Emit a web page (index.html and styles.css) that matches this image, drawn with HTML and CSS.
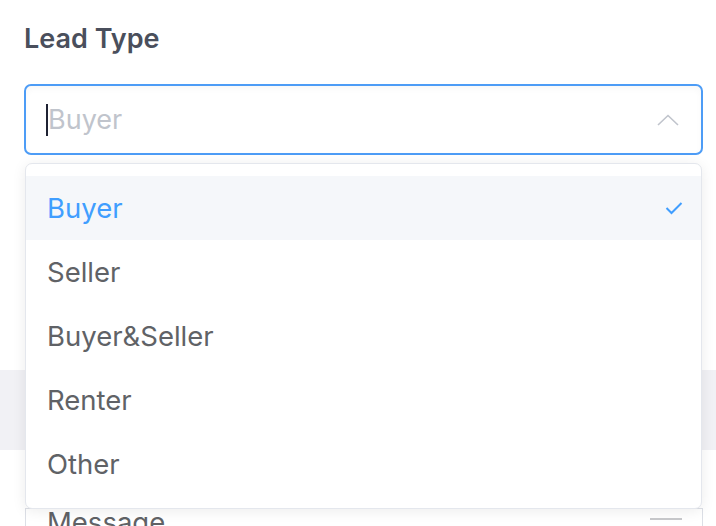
FILE: index.html
```html
<!DOCTYPE html>
<html lang="en">

<head>
  <meta charset="UTF-8" />
  <meta name="viewport" content="width=device-width, initial-scale=1.0" />
  <title>Lead Type</title>
  <link rel="stylesheet" href="styles.css">
</head>

<body>
  <form class="lead-form">
    <label class="field-label">Lead Type</label>

    <div class="select">
      <div class="select-input">
        <span class="caret"></span>
        <span class="placeholder">Buyer</span>
        <svg class="arrow" width="22" height="12" viewBox="0 0 22 12">
          <path d="M1 11 L11 1.5 L21 11" fill="none" stroke="#c0c4cc" stroke-width="1.6" />
        </svg>
      </div>

      <!-- opened dropdown -->
      <ul class="dropdown">
        <li class="option selected">
          Buyer
          <svg class="check" width="18" height="14" viewBox="0 0 18 14">
            <path d="M1.5 7 L6.5 12 L16.5 2" fill="none" stroke="#409eff" stroke-width="2" />
          </svg>
        </li>
        <li class="option">Seller</li>
        <li class="option">Buyer&amp;Seller</li>
        <li class="option">Renter</li>
        <li class="option">Other</li>
      </ul>
    </div>

    <div class="band"></div>

    <div class="message-box">
      <span class="message-label">Message</span>
      <span class="collapse"></span>
    </div>
  </form>
</body>

</html>
```

FILE: styles.css
```css
body {
  margin: 0;
  background: #fff;
  font-family: Inter, "Liberation Sans", sans-serif;
  overflow: hidden;
}

.lead-form {
  padding: 24px 13px 0 24px;
}

.field-label {
  display: block;
  font-size: 27px;
  font-weight: 600;
  color: #4a4f5c;
  line-height: 30px;
}

.select {
  position: relative;
  margin-top: 30px;
}

.select-input {
  display: flex;
  align-items: center;
  height: 67px;
  padding: 0 22px 0 20px;
  border: 2px solid #4d9cf6;
  border-radius: 7px;
  box-shadow: inset 0 3px 6px rgba(0, 0, 0, 0.03);
}

.caret {
  width: 2px;
  height: 32px;
  background: #1f2233;
}

.placeholder {
  flex: 1;
  font-size: 27px;
  color: #c0c4cc;
}

.dropdown {
  position: absolute;
  top: 79px;
  left: 1px;
  right: 1px;
  margin: 0;
  padding: 12px 0;
  list-style: none;
  background: #fff;
  border: 1px solid #e4e7ed;
  border-radius: 7px;
  box-shadow: 0 2px 14px rgba(0, 0, 0, 0.08);
  z-index: 2;
}

.option {
  display: flex;
  align-items: center;
  justify-content: space-between;
  height: 64px;
  padding: 0 18px 0 21px;
  font-size: 27.5px;
  color: #606266;
}

.option.selected {
  background: #f5f7fa;
  color: #409eff;
}

.band {
  height: 80px;
  margin: 215px -13px 0 -24px;
  background: #f1f1f5;
}

.message-box {
  display: flex;
  align-items: flex-start;
  justify-content: space-between;
  height: 18px;
  overflow: hidden;
  margin-top: 58px;
  margin-left: 1px;
  padding: 0 20px 0 21px;
  border: 1px solid #dcdfe6;
  border-bottom: none;
}

.message-label {
  font-size: 27.5px;
  color: #606266;
  line-height: 30px;
  margin-top: -2px;
}

.collapse {
  width: 32px;
  height: 2px;
  margin-top: 9px;
  background: #c8c9cc;
}
```
